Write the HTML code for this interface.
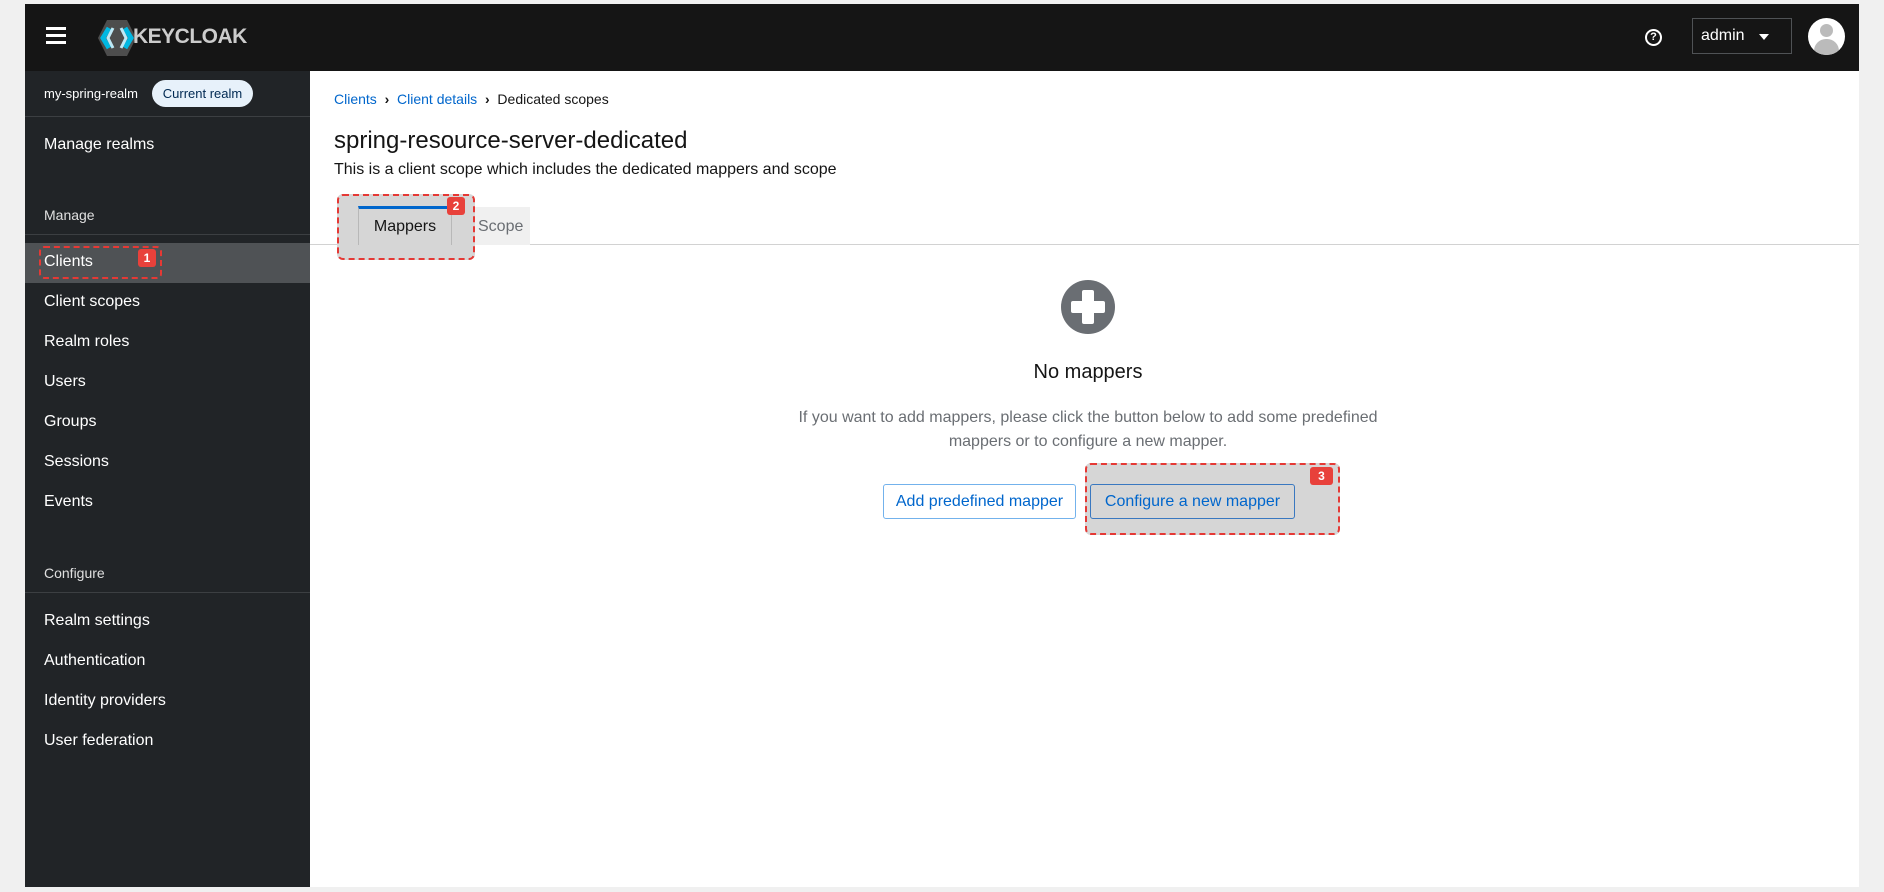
<!DOCTYPE html>
<html><head><meta charset="utf-8"><style>
*{box-sizing:border-box;margin:0;padding:0}
body{width:1884px;height:892px;background:#f0f0f0;font-family:"Liberation Sans",sans-serif;position:relative;overflow:hidden}
.abs{position:absolute}
#hdr{left:25px;top:4px;width:1834px;height:67px;background:#151515}
#side{left:25px;top:71px;width:285px;height:816px;background:#212427;color:#fff}
#main{left:310px;top:71px;width:1549px;height:816px;background:#fff}
.nav{position:absolute;left:19px;font-size:16px;color:#fff}
.sec{position:absolute;left:19px;font-size:14px;color:#e0e0e0}
.line{position:absolute;left:0;width:285px;height:1px;background:#3c3f42}
.red{border:2px dashed #e53935;border-radius:5px}
.badge{position:absolute;background:#e8413b;color:#fff;font-size:12px;font-weight:bold;border-radius:3px;text-align:center;line-height:18px;width:18px;height:18px}
.btn{position:absolute;height:35px;border:1px solid #0066cc;border-radius:3px;color:#0066cc;font-size:16px;line-height:33px;text-align:center;background:#fff}
</style></head><body>
<div class="abs" id="hdr">
 <div class="abs" style="left:21px;top:23px;width:20px;height:3px;background:#fff;box-shadow:0 7px 0 #fff,0 14px 0 #fff"></div>
 <svg class="abs" style="left:72px;top:14px" width="40" height="40" viewBox="0 0 40 40"><polygon points="10,2 30,2 39,20 30,38 10,38 1,20" fill="#4d4d4d"/><path d="M12 10 L6 20 L12 30 M28 10 L34 20 L28 30" stroke="#00b8e3" stroke-width="5" fill="none"/><path d="M16 10 L11 20 L16 30 M24 10 L29 20 L24 30" stroke="#bfe8f5" stroke-width="3" fill="none"/></svg>
 <div class="abs" style="left:108px;top:21px;color:#ccc;font-size:21px;font-weight:bold;letter-spacing:-0.5px">KEYCLOAK</div>
 <div class="abs" style="left:1620px;top:25px;width:17px;height:17px;border:2px solid #fff;border-radius:50%;color:#fff;font-size:11px;font-weight:bold;text-align:center;line-height:13px">?</div>
 <div class="abs" style="left:1667px;top:14px;width:100px;height:36px;border:1px solid #4f5255;color:#fff;font-size:16px;line-height:34px;padding-left:8px">admin<span class="abs" style="left:66px;top:15px;border:5px solid transparent;border-top:6px solid #fff"></span></div>
 <div class="abs" style="left:1783px;top:14px;width:37px;height:37px;border-radius:50%;background:#fff;overflow:hidden"><div class="abs" style="left:12px;top:6px;width:13px;height:13px;border-radius:50%;background:#bbb"></div><div class="abs" style="left:6px;top:21px;width:25px;height:20px;border-radius:12px 12px 0 0;background:#bbb"></div></div>
</div>
<div class="abs" id="side">
 <div class="abs" style="left:19px;top:15px;font-size:13px">my-spring-realm</div>
 <div class="abs" style="left:127px;top:9px;width:101px;height:27px;border-radius:14px;background:#e7f1fa;color:#002952;font-size:13px;line-height:27px;text-align:center">Current realm</div>
 <div class="line" style="top:45px"></div>
 <div class="nav" style="top:65px">Manage realms</div>
 <div class="sec" style="top:136px">Manage</div>
 <div class="line" style="top:163px"></div>
 <div class="abs" style="left:0;top:172px;width:285px;height:40px;background:#4f5255"></div>
 <div class="abs red" style="left:14px;top:175px;width:123px;height:33px"></div>
 <div class="nav" style="top:182px">Clients</div>
 <div class="badge" style="left:113px;top:178px">1</div>
 <div class="nav" style="top:222px">Client scopes</div>
 <div class="nav" style="top:262px">Realm roles</div>
 <div class="nav" style="top:302px">Users</div>
 <div class="nav" style="top:342px">Groups</div>
 <div class="nav" style="top:382px">Sessions</div>
 <div class="nav" style="top:422px">Events</div>
 <div class="sec" style="top:494px">Configure</div>
 <div class="line" style="top:521px"></div>
 <div class="nav" style="top:541px">Realm settings</div>
 <div class="nav" style="top:581px">Authentication</div>
 <div class="nav" style="top:621px">Identity providers</div>
 <div class="nav" style="top:661px">User federation</div>
</div>
<div class="abs" id="main">
 <div class="abs" style="left:24px;top:20px;font-size:14px;color:#151515"><span style="color:#0066cc">Clients</span> &nbsp;<b>›</b>&nbsp; <span style="color:#0066cc">Client details</span> &nbsp;<b>›</b>&nbsp; Dedicated scopes</div>
 <div class="abs" style="left:24px;top:56px;font-size:24px;color:#151515">spring-resource-server-dedicated</div>
 <div class="abs" style="left:24px;top:90px;font-size:16px;color:#151515">This is a client scope which includes the dedicated mappers and scope</div>
 <div class="abs" style="left:0;top:173px;width:1549px;height:1px;background:#d2d2d2"></div>
 <div class="abs" style="left:142px;top:136px;width:78px;height:38px;background:#f0f0f0;color:#6a6e73;font-size:16px;line-height:40px;padding-left:26px">Scope</div>
 <div class="abs red" style="left:27px;top:123px;width:138px;height:66px;background:#d6d6d6;border-radius:6px"></div>
 <div class="abs" style="left:48px;top:135px;width:94px;height:39px;background:#d6d6d6;border-top:3px solid #06c;border-left:1px solid #b8b8b8;border-right:1px solid #b8b8b8;font-size:16px;color:#151515;text-align:center;line-height:36px">Mappers</div>
 <div class="badge" style="left:137px;top:126px">2</div>
 <div class="abs" style="left:751px;top:209px;width:54px;height:54px;border-radius:50%;background:#6a6e73"><div class="abs" style="left:21px;top:10px;width:12px;height:34px;background:#fff;border-radius:2px"></div><div class="abs" style="left:10px;top:21px;width:34px;height:12px;background:#fff;border-radius:2px"></div></div>
 <div class="abs" style="left:0;width:1556px;top:290px;text-align:center;font-size:20px;color:#151515">No mappers</div>
 <div class="abs" style="left:0;width:1556px;top:335px;text-align:center;font-size:16px;color:#6a6e73;line-height:24px">If you want to add mappers, please click the button below to add some predefined<br>mappers or to configure a new mapper.</div>
 <div class="abs red" style="left:775px;top:392px;width:255px;height:72px;background:#d6d6d6;border-radius:6px"></div>
 <div class="btn" style="left:573px;top:413px;width:193px;border-color:#73b2ec">Add predefined mapper</div>
 <div class="btn" style="left:780px;top:413px;width:205px;background:#d6d6d6;border-color:#3a78c0">Configure a new mapper</div>
 <div class="badge" style="left:1000px;top:396px;width:23px">3</div>
</div>
</body></html>
